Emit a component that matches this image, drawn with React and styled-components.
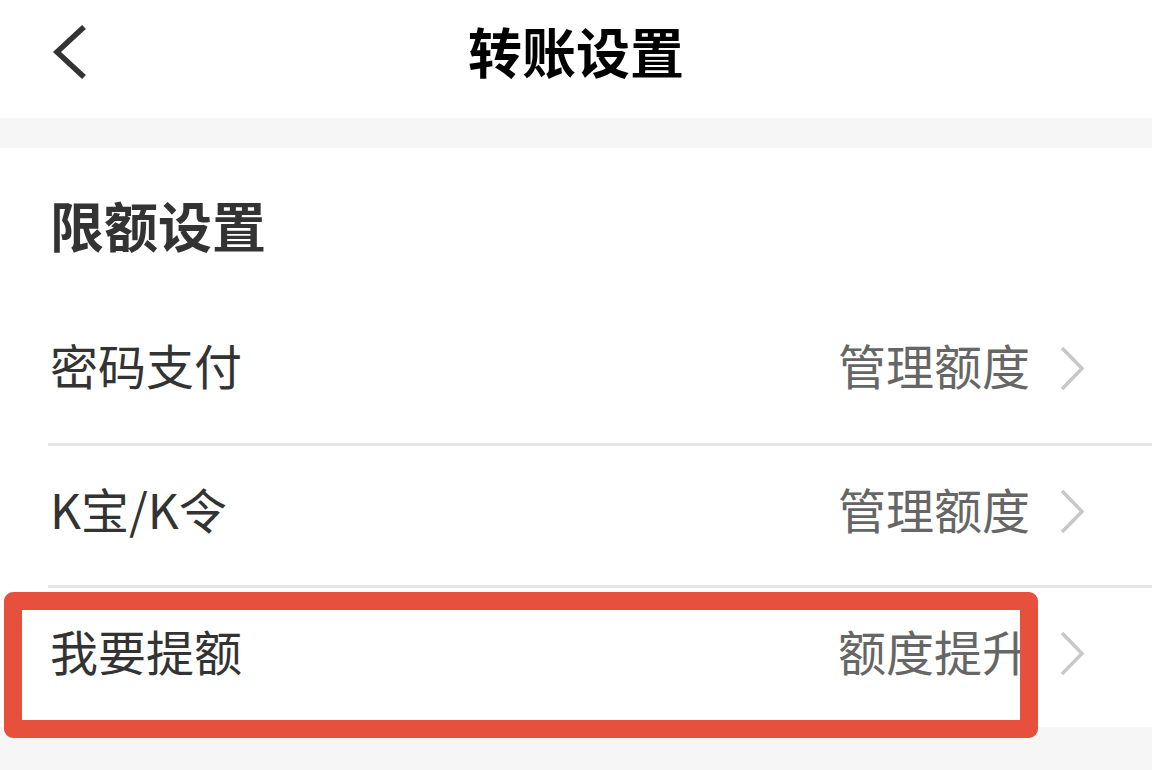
import React from "react";
import styled, { createGlobalStyle } from "styled-components";

const Global = createGlobalStyle`
  html, body { margin: 0; padding: 0; background: #f6f6f6; }
  body { font-family: "Noto Sans CJK SC", "Noto Sans", sans-serif; }
  #root { min-height: 770px; }
`;

const Page = styled.div`
  position: relative;
  width: 1152px;
  height: 770px;
  overflow: hidden;
  background: #f6f6f6;
`;

const Header = styled.header`
  position: relative;
  height: 118px;
  box-sizing: border-box;
  padding-bottom: 16px;
  background: #fff;
  display: flex;
  align-items: center;
  justify-content: center;
  margin-bottom: 30px;
`;

const BackButton = styled.button`
  position: absolute;
  left: 46px;
  top: 22px;
  width: 46px;
  height: 60px;
  border: 0;
  padding: 0;
  background: none;
  display: flex;
  align-items: center;
  justify-content: center;
`;

const Title = styled.h1`
  margin: 0;
  font-size: 54px;
  font-weight: 700;
  color: #000;
  line-height: 1;
`;

const Card = styled.section`
  background: #fff;
`;

const SectionTitle = styled.h2`
  margin: 0;
  height: 153px;
  box-sizing: border-box;
  padding: 0 0 0 50px;
  display: flex;
  align-items: center;
  font-size: 54px;
  font-weight: 700;
  color: #333;
  line-height: 1;
`;

const Row = styled.div`
  height: 142px;
  margin-left: 48px;
  padding-right: 67px;
  padding-bottom: 8px;
  box-sizing: border-box;
  display: flex;
  align-items: center;
  border-top: ${(p) => (p.$first ? "none" : "3px solid #e6e6e6")};
`;

const Label = styled.span`
  flex: 1;
  padding-left: 2px;
  margin-bottom: 8px;
  font-size: 48px;
  color: #333;
  line-height: 1;
`;

const Value = styled.span`
  font-size: 48px;
  color: #666;
  line-height: 1;
  margin-right: 29px;
  margin-bottom: 8px;
`;

const Highlight = styled.div`
  position: absolute;
  left: 4px;
  top: 592px;
  width: 1034px;
  height: 146px;
  box-sizing: border-box;
  border: 18px solid #e8503e;
  border-radius: 9px;
  pointer-events: none;
`;

const Chevron = () => (
  <svg width="26" height="45" viewBox="0 0 26 45">
    <path d="M3 2 L23 22.5 L3 43" fill="none" stroke="#c8c8c8" strokeWidth="3.5" />
  </svg>
);

const BackIcon = () => (
  <svg width="36" height="54" viewBox="0 0 36 54">
    <path d="M33 2 L6 27 L33 52" fill="none" stroke="#333" strokeWidth="5.5" />
  </svg>
);

const rows = [
  { label: "密码支付", value: "管理额度" },
  { label: "K宝/K令", value: "管理额度" },
  { label: "我要提额", value: "额度提升" },
];

export default function App() {
  return (
    <Page>
      <Global />
      <Header>
        <BackButton aria-label="返回">
          <BackIcon />
        </BackButton>
        <Title>转账设置</Title>
      </Header>
      <Card>
        <SectionTitle>限额设置</SectionTitle>
        {rows.map((r, i) => (
          <Row key={r.label} $first={i === 0}>
            <Label>{r.label}</Label>
            <Value>{r.value}</Value>
            <Chevron />
          </Row>
        ))}
      </Card>
      <Highlight />
    </Page>
  );
}
